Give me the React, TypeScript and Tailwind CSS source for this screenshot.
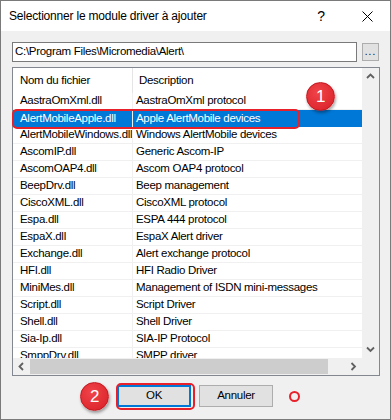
import React from 'react';

const ROWS = [
  { file: 'AastraOmXml.dll', desc: 'AastraOmXml protocol' },
  { file: 'AlertMobileApple.dll', desc: 'Apple AlertMobile devices', selected: true },
  { file: 'AlertMobileWindows.dll', desc: 'Windows AlertMobile devices' },
  { file: 'AscomIP.dll', desc: 'Generic Ascom-IP' },
  { file: 'AscomOAP4.dll', desc: 'Ascom OAP4 protocol' },
  { file: 'BeepDrv.dll', desc: 'Beep management' },
  { file: 'CiscoXML.dll', desc: 'CiscoXML protocol' },
  { file: 'Espa.dll', desc: 'ESPA 444 protocol' },
  { file: 'EspaX.dll', desc: 'EspaX Alert driver' },
  { file: 'Exchange.dll', desc: 'Alert exchange protocol' },
  { file: 'HFI.dll', desc: 'HFI Radio Driver' },
  { file: 'MiniMes.dll', desc: 'Management of ISDN mini-messages' },
  { file: 'Script.dll', desc: 'Script Driver' },
  { file: 'Shell.dll', desc: 'Shell Driver' },
  { file: 'Sia-Ip.dll', desc: 'SIA-IP Protocol' },
  { file: 'SmppDrv.dll', desc: 'SMPP driver' },
];

function Chevron({ dir }: { dir: 'up' | 'down' | 'left' | 'right' }) {
  const pts = {
    up: '1,6 4.5,2.5 8,6',
    down: '1,2.5 4.5,6 8,2.5',
    left: '6,1 2.5,4.5 6,8',
    right: '2.5,1 6,4.5 2.5,8',
  }[dir];
  return (
    <svg width="9" height="9" viewBox="0 0 9 9">
      <polyline points={pts} fill="none" stroke="#606060" strokeWidth="1.8" />
    </svg>
  );
}

function Badge({ n }: { n: string }) {
  return (
    <div className="w-[29px] h-[29px] rounded-full bg-[radial-gradient(circle_at_40%_35%,#f0444a,#d81e26)] border border-[#c4161d] shadow-[1px_2px_3px_rgba(0,0,0,0.35)] flex items-center justify-center text-white text-[17px] leading-none">
      {n}
    </div>
  );
}

export default function App() {
  return (
    <div className="relative w-[391px] h-[420px] bg-[#f0f0f0] border border-[#7a7a7a] flex flex-col text-[11.5px] tracking-[-0.3px] text-black font-['Liberation_Sans',Arial,sans-serif]">
      {/* title bar */}
      <div className="h-[30px] bg-white flex items-center shrink-0">
        <span className="pl-[8px] flex-1 text-[12px] tracking-[-0.2px]">Selectionner le module driver à ajouter</span>
        <span className="w-[46px] text-center text-[14px]">?</span>
        <span className="w-[46px] flex justify-center">
          <svg width="11" height="11" viewBox="0 0 11 11">
            <path d="M0.5 0.5 L10.5 10.5 M10.5 0.5 L0.5 10.5" stroke="#000" strokeWidth="1" />
          </svg>
        </span>
      </div>

      <div className="px-[11px] pt-[11px] flex flex-col">
        <div className="flex items-start">
          <div className="w-[345px] h-[20px] bg-white border border-[#7a7a7a] flex items-center pl-[2px]">
            C:\Program Files\Micromedia\Alert\
          </div>
          <div className="ml-[5px] mt-[1px] w-[17px] h-[18px] bg-[#e1e1e1] border border-[#adadad] flex items-end justify-center pb-[3px] text-[10px] leading-none tracking-[1px]">
            ...
          </div>
        </div>

        {/* list */}
        <div className="mt-[5px] w-[368px] h-[309px] bg-white border border-[#828790] flex flex-col">
          <div className="flex flex-1 min-h-0">
            <div className="w-[349px] overflow-hidden flex flex-col">
              <div className="h-[25px] shrink-0 flex">
                <div className="w-[120px] border-r border-[#e5e5e5] pl-[7px] flex items-center">Nom du fichier</div>
                <div className="flex-1 pl-[6px] flex items-center">Description</div>
              </div>
              {ROWS.map(r => (
                <div
                  key={r.file}
                  className={
                    r.selected
                      ? 'h-[17px] shrink-0 flex bg-[#0078d7] text-white'
                      : 'h-[17px] shrink-0 flex border-b border-[#f0f0f0]'
                  }
                >
                  <div className="w-[120px] border-r border-[#f0f0f0] pl-[7px] flex items-center whitespace-nowrap overflow-hidden">
                    {r.file}
                  </div>
                  <div className="flex-1 pl-[3px] flex items-center whitespace-nowrap">{r.desc}</div>
                </div>
              ))}
            </div>
            {/* vertical scrollbar */}
            <div className="w-[17px] bg-[#f0f0f0] flex flex-col justify-between">
              <div className="h-[17px] flex items-center justify-center"><Chevron dir="up" /></div>
              <div className="h-[17px] flex items-center justify-center"><Chevron dir="down" /></div>
            </div>
          </div>
          {/* horizontal scrollbar */}
          <div className="h-[17px] shrink-0 flex bg-[#f0f0f0]">
            <div className="w-[17px] flex items-center justify-center"><Chevron dir="left" /></div>
            <div className="w-[298px] my-[1px] bg-[#cdcdcd]" />
            <div className="flex-1" />
            <div className="w-[17px] flex items-center justify-center"><Chevron dir="right" /></div>
            <div className="w-[17px]" />
          </div>
        </div>

        {/* buttons */}
        <div className="mt-[9px] flex justify-center gap-[8px] pr-[1px]">
          <div className="w-[74px] h-[22px] bg-[#e1e1e1] border-2 border-[#0078d7] flex items-center justify-center">OK</div>
          <div className="w-[74px] h-[22px] bg-[#e1e1e1] border border-[#adadad] flex items-center justify-center">Annuler</div>
        </div>
      </div>

      {/* annotations */}
      <div className="absolute left-[11px] top-[108px] w-[288px] h-[20px] rounded-[5px] border-2 border-[#e8202a]" />
      <div className="absolute left-[305px] top-[81px]"><Badge n="1" /></div>
      <div className="absolute left-[115px] top-[382px] w-[79px] h-[27px] rounded-[5px] border-2 border-[#e8202a]" />
      <div className="absolute left-[79px] top-[381px]"><Badge n="2" /></div>
      <div className="absolute left-[288px] top-[390px] w-[11px] h-[11px] rounded-full border-2 border-[#e8202a]" />
    </div>
  );
}
